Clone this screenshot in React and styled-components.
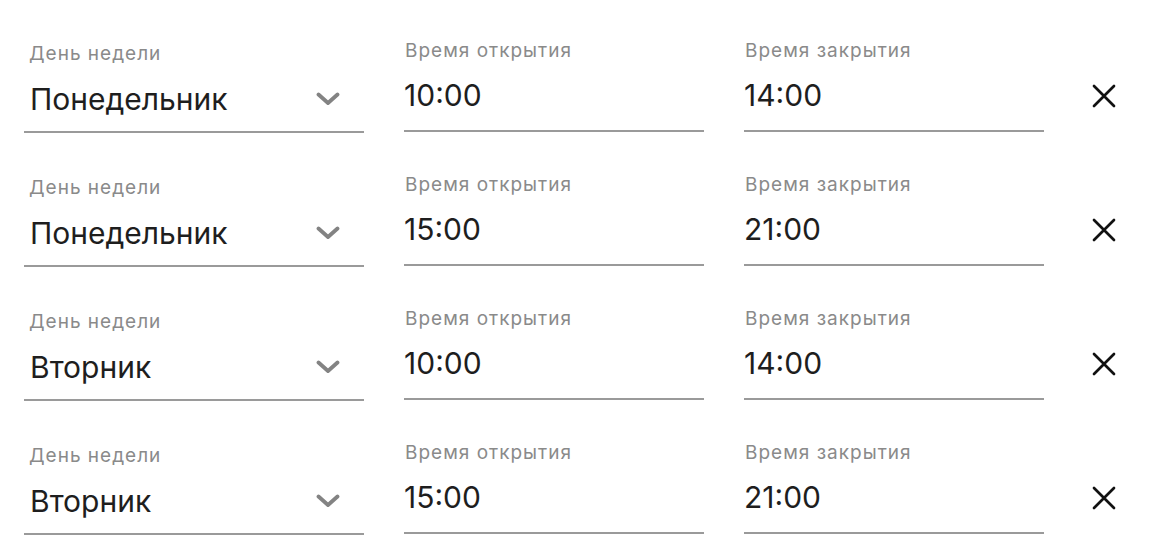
import React, { useState } from "react";
import styled, { createGlobalStyle } from "styled-components";

const schedule = [
  { day: "Понедельник", open: "10:00", close: "14:00" },
  { day: "Понедельник", open: "15:00", close: "21:00" },
  { day: "Вторник", open: "10:00", close: "14:00" },
  { day: "Вторник", open: "15:00", close: "21:00" },
];

function Chevron() {
  return (
    <svg width="24" height="14" viewBox="0 0 24 14" fill="none">
      <path
        d="M2.5 2.5 L12 11 L21.5 2.5"
        stroke="#838383"
        strokeWidth="3.8"
        strokeLinecap="round"
        strokeLinejoin="round"
      />
    </svg>
  );
}

function Cross() {
  return (
    <svg width="24" height="24" viewBox="0 0 24 24" fill="none">
      <path
        d="M2 2 L22 22 M22 2 L2 22"
        stroke="#111"
        strokeWidth="2.7"
        strokeLinecap="round"
      />
    </svg>
  );
}

function App() {
  const [rows, setRows] = useState(schedule);

  return (
    <>
      <GlobalStyle />
      <List>
        {rows.map((row, i) => (
          <Row key={i}>
            <DayField>
              <DayLabel>День недели</DayLabel>
              <DayValue>
                <span>{row.day}</span>
                <Chevron />
              </DayValue>
            </DayField>
            <TimeField>
              <Label>Время открытия</Label>
              <Value>{row.open}</Value>
            </TimeField>
            <TimeField>
              <Label>Время закрытия</Label>
              <Value>{row.close}</Value>
            </TimeField>
            <RemoveButton
              onClick={() => setRows((prev) => prev.filter((_, j) => j !== i))}
            >
              <Cross />
            </RemoveButton>
          </Row>
        ))}
      </List>
    </>
  );
}

export default App;

// styles

const GlobalStyle = createGlobalStyle`
  body {
    margin: 0;
    background: #ffffff;
    font-family: Inter, "Noto Sans", sans-serif;
  }
`;

const List = styled.div`
  display: flex;
  flex-direction: column;
  gap: 41px;
  padding: 40px 0 0 24px;
`;

const Row = styled.div`
  display: flex;
  align-items: flex-start;
`;

const TimeField = styled.div`
  width: 300px;
  margin-left: 40px;
  border-bottom: 2px solid #9a9a9a;
  padding-bottom: 17px;
`;

const Label = styled.div`
  font-size: 19px;
  line-height: 22px;
  letter-spacing: 1px;
  color: #8a8a8a;
  padding-left: 1px;
`;

const Value = styled.div`
  margin-top: 15px;
  font-size: 30px;
  line-height: 36px;
  color: #1e1e1e;
`;

const DayField = styled.div`
  width: 340px;
  margin-top: 3px;
  border-bottom: 2px solid #9a9a9a;
  padding-bottom: 14px;
`;

const DayLabel = styled(Label)`
  padding-left: 5px;
`;

const DayValue = styled(Value)`
  margin-top: 16px;
  display: flex;
  justify-content: space-between;
  align-items: center;
  padding: 0 24px 0 6px;
`;

const RemoveButton = styled.button`
  margin: 40px 0 0 44px;
  width: 32px;
  height: 32px;
  padding: 0;
  border: none;
  background: transparent;
  display: flex;
  align-items: center;
  justify-content: center;
  cursor: pointer;
`;
